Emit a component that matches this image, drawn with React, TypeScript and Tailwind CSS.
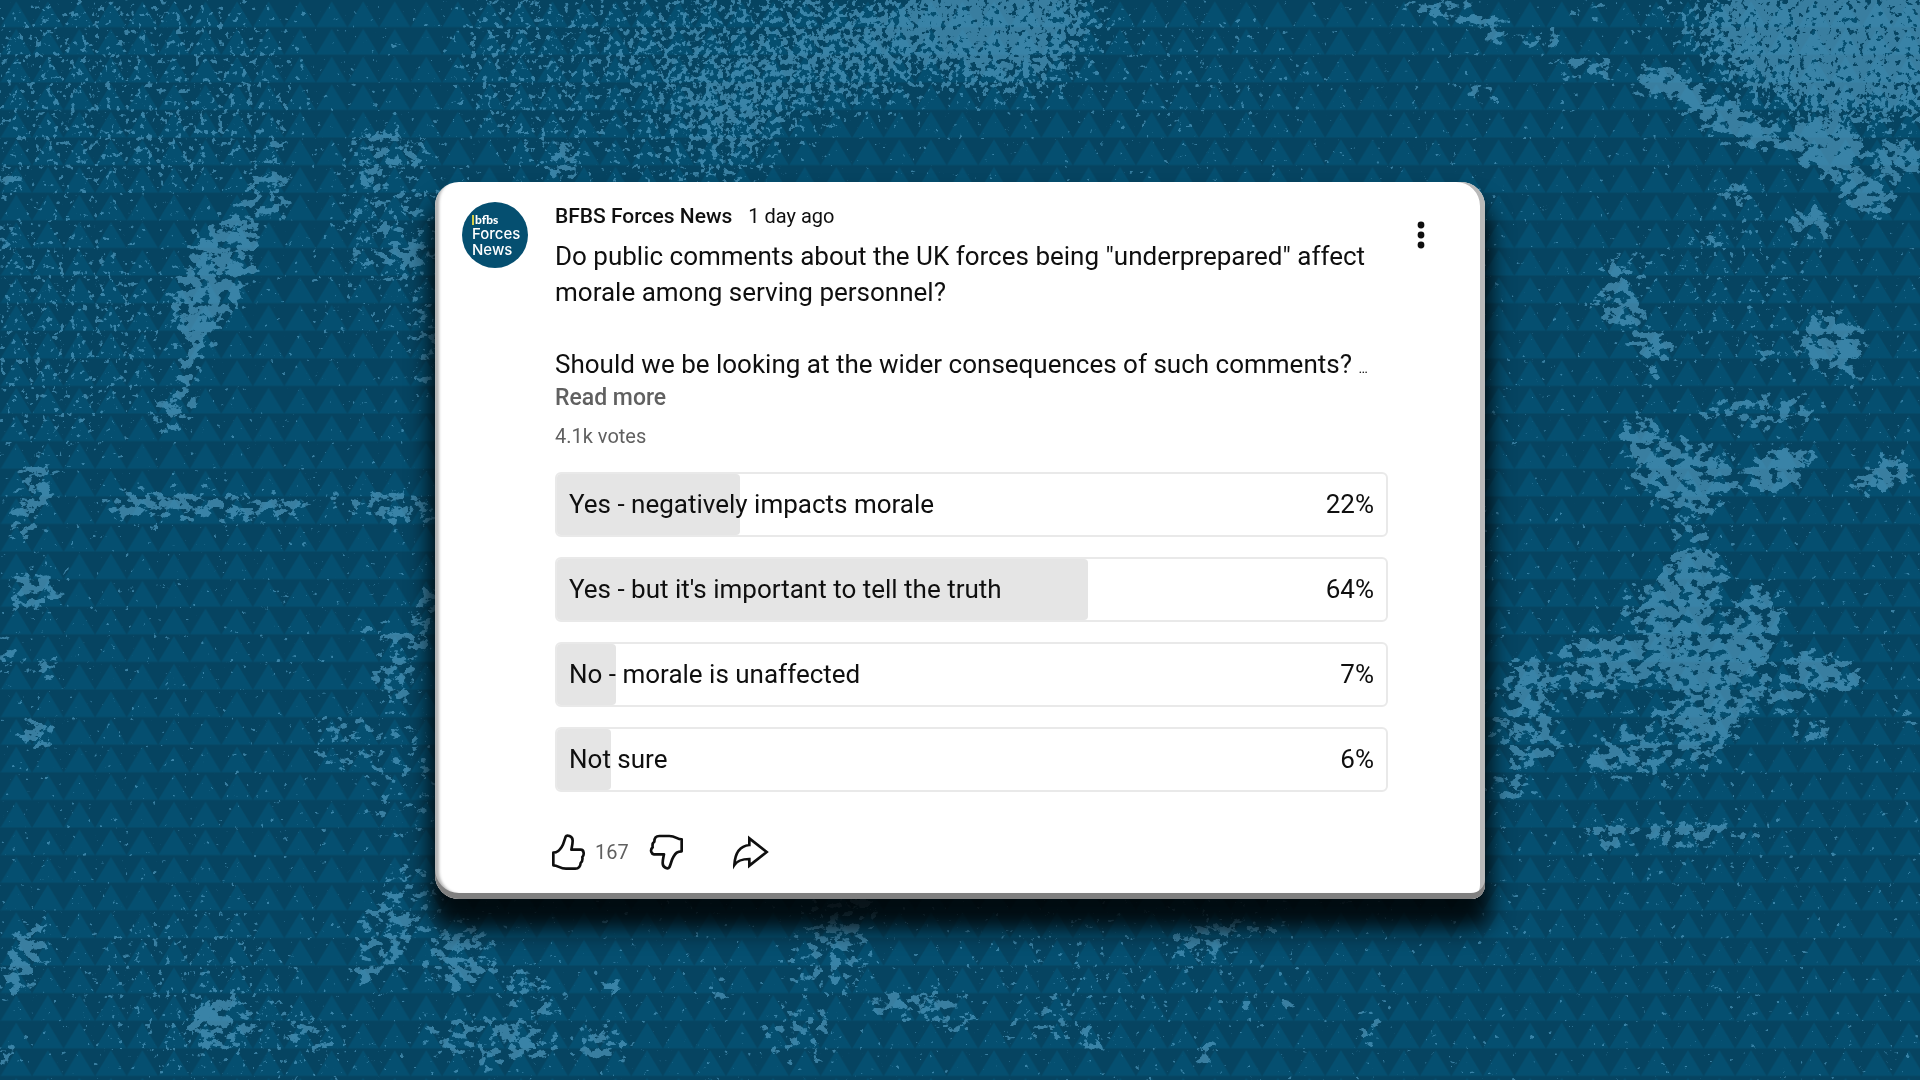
/* ── DATA ─────────────────────────────────────────── */
const pollOptions = [
  { id: "negative",   label: "Yes - negatively impacts morale",            percent: "22%", share: 22.1 },
  { id: "truth",      label: "Yes - but it's important to tell the truth", percent: "64%", share: 64.1 },
  { id: "unaffected", label: "No - morale is unaffected",                  percent: "7%",  share: 7.1  },
  { id: "unsure",     label: "Not sure",                                   percent: "6%",  share: 6.5  },
];

/* cx, cy, rx, ry, rotation, density */
type Blob = [number, number, number, number, number, number];

const specks: Blob[] = [
  [130, 90, 180, 110, 0, 0.31],  [60, 330, 110, 120, 0, 0.27],  [540, 60, 90, 100, 0, 0.35],
  [760, 50, 150, 80, 0, 0.48],   [745, 110, 50, 60, 0, 0.35],   [690, 150, 80, 60, 0, 0.36],
  [990, 18, 115, 46, 0, 0.9],    [1015, 65, 60, 34, 0, 0.65],   [900, 55, 120, 50, 0, 0.35],
  [1840, 25, 140, 70, 0, 0.92],  [1880, 80, 90, 50, 0, 0.7],    [1780, 90, 90, 30, 20, 0.42],
  [1690, 20, 60, 25, 0, 0.4],    [190, 980, 110, 70, 0, 0.22],  [250, 1050, 120, 30, 0, 0.2],
  [390, 230, 60, 110, 0, 0.22],  [1740, 280, 80, 80, 0, 0.18],  [1200, 80, 120, 70, 0, 0.14],
  [1120, 970, 180, 60, 0, 0.14], [1690, 850, 130, 30, 0, 0.14],
];

const patches: Blob[] = [
  // left side
  [215, 275, 36, 68, 25, 0.84],  [268, 195, 26, 34, 10, 0.62],  [277, 142, 8, 16, 30, 0.8],
  [192, 355, 12, 44, 15, 0.9],   [175, 412, 22, 20, 0, 0.72],   [390, 148, 42, 24, 15, 0.58],
  [365, 176, 14, 10, 0, 0.85],   [390, 230, 46, 54, 0, 0.42],   [412, 260, 18, 16, 0, 0.62],
  [425, 340, 16, 60, 0, 0.5],    [565, 160, 18, 24, 20, 0.75],  [8, 178, 14, 22, 0, 0.7],
  [6, 237, 14, 12, 0, 0.75],     [38, 485, 22, 26, 15, 0.72],   [22, 520, 20, 24, 0, 0.54],
  [150, 505, 55, 15, 0, 0.82],   [240, 507, 70, 14, 0, 0.72],   [400, 508, 38, 18, 0, 0.68],
  [340, 502, 60, 6, 0, 0.7],     [35, 590, 26, 24, 0, 0.76],    [48, 667, 13, 12, 0, 0.95],
  [5, 662, 12, 22, 0, 0.76],     [38, 732, 18, 15, 20, 0.95],   [24, 960, 18, 46, 20, 0.8],
  [5, 1052, 12, 14, 0, 0.75],    [425, 610, 12, 34, 10, 0.72],  [400, 665, 24, 40, 15, 0.58],
  [370, 632, 18, 8, 0, 0.82],    [390, 690, 14, 12, 0, 0.78],   [345, 740, 36, 34, 0, 0.46],
  [400, 780, 34, 70, 0, 0.36],
  // bottom edge
  [410, 895, 34, 36, 0, 0.48],   [385, 938, 34, 34, 40, 0.58],  [460, 958, 34, 36, 0, 0.7],
  [365, 980, 14, 18, 20, 0.7],   [520, 985, 28, 16, 0, 0.66],   [210, 1016, 32, 17, -40, 0.86],
  [232, 1035, 34, 12, -30, 0.68], [300, 1026, 24, 14, -45, 0.66], [322, 1042, 12, 8, 0, 0.9],
  [434, 1036, 18, 7, 35, 0.95],  [490, 1040, 55, 30, 0, 0.52],  [600, 1045, 28, 18, 0, 0.74],
  [530, 1042, 28, 22, 0, 0.52],  [610, 985, 16, 10, 0, 0.74],   [550, 1005, 14, 14, 0, 0.66],
  [845, 912, 34, 30, 0, 0.56],   [830, 960, 46, 34, 0, 0.52],   [905, 1003, 44, 12, 0, 0.88],
  [955, 1015, 26, 14, 30, 0.68], [800, 1035, 40, 30, 0, 0.48],  [1010, 1028, 8, 10, 0, 0.9],
  [1060, 1020, 30, 20, 0, 0.5],  [1092, 1045, 14, 18, 0, 0.6],  [1200, 945, 28, 14, 0, 0.74],
  [1235, 930, 50, 9, 0, 0.66],   [1248, 1005, 10, 8, 0, 0.9],   [1282, 1006, 14, 8, 0, 0.78],
  [1205, 1055, 10, 16, 20, 0.85], [1370, 1030, 10, 20, 0, 0.7], [715, 990, 12, 18, 0, 0.56],
  // right side
  [1450, 12, 46, 10, 10, 0.9],   [1495, 34, 18, 14, 30, 0.86],  [1545, 40, 24, 9, 10, 0.84],
  [1590, 68, 34, 11, 0, 0.8],    [1670, 86, 38, 17, 15, 0.98],  [1735, 122, 52, 18, 25, 0.98],
  [1825, 145, 42, 30, 15, 1],    [1900, 158, 28, 22, -15, 0.88], [1866, 195, 32, 19, 30, 0.95],
  [1740, 195, 22, 10, 10, 1],    [1812, 222, 26, 12, 0, 1],     [1708, 240, 22, 9, 15, 0.75],
  [1484, 92, 24, 10, 20, 0.66],  [1590, 6, 16, 10, 0, 0.7],     [1625, 264, 32, 7, 0, 0.85],
  [1620, 300, 24, 28, 0, 0.78],  [1652, 342, 34, 15, 40, 0.8],  [1645, 372, 10, 14, 0, 0.8],
  [1830, 342, 36, 30, 0, 0.86],  [1850, 376, 14, 9, 0, 0.95],   [1685, 475, 56, 34, 5, 0.82],
  [1640, 435, 22, 24, 0, 0.76],  [1780, 470, 36, 21, -25, 1],   [1882, 478, 36, 12, -18, 1],
  [1890, 466, 12, 14, 0, 1],     [1760, 412, 66, 17, 0, 0.68],  [1690, 520, 26, 24, 0, 0.56],
  [1765, 350, 14, 16, 0, 0.56],
  // big splash beside the card
  [1690, 590, 36, 42, 0, 0.84],  [1650, 605, 28, 20, 0, 0.76],  [1680, 658, 80, 34, 0, 0.84],
  [1755, 630, 28, 46, 10, 0.8],  [1825, 672, 42, 17, 20, 0.95], [1590, 665, 36, 36, -30, 0.7],
  [1528, 685, 26, 28, 0, 0.84],  [1530, 735, 38, 32, 0, 0.66],  [1712, 712, 36, 32, 0, 0.78],
  [1775, 695, 38, 18, 0, 0.72],  [1608, 760, 30, 15, -10, 0.9], [1670, 745, 60, 42, 0, 0.54],
  [1522, 770, 10, 12, 0, 0.95],  [1512, 790, 26, 8, 15, 0.9],   [1812, 730, 18, 12, 0, 0.9],
  [1608, 834, 28, 13, 0, 0.88],  [1688, 832, 46, 13, 0, 0.86],  [1700, 562, 26, 18, 0, 0.64],
  [1907, 722, 12, 9, 0, 1],      [1750, 832, 14, 10, 0, 0.7],
];

/* ── BACKDROP ─────────────────────────────────────── */
function Blobs({ items }: { items: Blob[] }) {
  return (
    <>
      {items.map(([cx, cy, rx, ry, turn, density], i) => (
        <ellipse key={i} cx={cx} cy={cy} rx={rx} ry={ry} fillOpacity={density} transform={`rotate(${turn} ${cx} ${cy})`} />
      ))}
    </>
  );
}

function Backdrop() {
  return (
    <svg
      className="absolute inset-0 w-full h-full"
      viewBox="0 0 1920 1080"
      preserveAspectRatio="xMidYMid slice"
      aria-hidden="true"
    >
      <defs>
        <pattern id="triangles" x="0.5" y="0" width="31.54" height="27.6" patternUnits="userSpaceOnUse">
          <path d="M15.77 1.6 L31.3 27.2 H0.2 Z" fill="#054f70" />
        </pattern>
        <filter id="specks" x="0" y="0" width="1920" height="1080" filterUnits="userSpaceOnUse" colorInterpolationFilters="sRGB">
          <feGaussianBlur in="SourceGraphic" stdDeviation="20" result="density" />
          <feTurbulence type="fractalNoise" baseFrequency="0.17" numOctaves="3" seed="7" result="noise" />
          <feComposite in="density" in2="noise" operator="arithmetic" k1="0" k2="0.5" k3="1" k4="0" />
          <feColorMatrix values="0 0 0 0 0.396  0 0 0 0 0.69  0 0 0 0 0.84  0 0 0 14 -11" />
        </filter>
        <filter id="patches" x="0" y="0" width="1920" height="1080" filterUnits="userSpaceOnUse" colorInterpolationFilters="sRGB">
          <feGaussianBlur in="SourceGraphic" stdDeviation="8" result="density" />
          <feTurbulence type="fractalNoise" baseFrequency="0.1 0.12" numOctaves="4" seed="12" result="noise" />
          <feComposite in="density" in2="noise" operator="arithmetic" k1="0" k2="0.6" k3="1.2" k4="-0.15" />
          <feColorMatrix values="0 0 0 0 0.396  0 0 0 0 0.69  0 0 0 0 0.84  0 0 0 14 -11.4" />
        </filter>
      </defs>
      <rect width="1920" height="1080" fill="#064461" />
      <rect width="1920" height="1080" fill="url(#triangles)" />
      <g opacity="0.55">
        <g filter="url(#specks)">
          <rect width="1920" height="1080" fillOpacity="0.04" />
          <Blobs items={specks} />
        </g>
        <g filter="url(#patches)">
          <Blobs items={patches} />
        </g>
      </g>
    </svg>
  );
}

/* ── ICONS ────────────────────────────────────────── */
function ThumbUp() {
  return (
    <svg className="w-9 h-9" viewBox="360 99 108 108" fill="none" stroke="#0f0f0f" strokeWidth="8" strokeLinejoin="round">
      <path d="M367 155 V193 C382 193 386 203 405 203 H433 C444 203 448 197 449 186 C455 181 455 174 454 168 C460 163 460 146 449 146 H421 C423 137 425 129 425 119 C425 104 407 101 404 107 C399 119 399 128 392 138 C385 148 380 155 367 155 Z" />
    </svg>
  );
}

function ThumbDown() {
  return (
    <svg className="w-9 h-9" viewBox="657 105 108 108" fill="none" stroke="#0f0f0f" strokeWidth="8" strokeLinejoin="round">
      <path d="M755 157 V121 C740 121 738 111 718 111 H688 C677 111 673 118 673 128 C667 132 667 139 668 145 C661 150 661 164 672 166 H702 C700 176 698 183 698 192 C698 207 714 211 718 205 C724 192 724 184 730 174 C737 162 742 157 755 157 Z" />
    </svg>
  );
}

function Share() {
  return (
    <svg className="w-9 h-9" viewBox="910 103 108 108" fill="none" stroke="#0f0f0f" strokeWidth="8">
      <path d="M959 116 L1011 157 L959 198 V178 C936 178 922 184 914 196 C916 160 930 139 959 136 Z" />
    </svg>
  );
}

function Dots() {
  return (
    <svg className="w-2 h-7" viewBox="0 0 8 28" fill="#0f0f0f">
      <circle cx="4" cy="4" r="3.4" />
      <circle cx="4" cy="14" r="3.4" />
      <circle cx="4" cy="24" r="3.4" />
    </svg>
  );
}

/* ── POST ─────────────────────────────────────────── */
function Avatar() {
  return (
    <a
      href="#channel"
      aria-label="BFBS Forces News channel"
      className="w-[66px] h-[66px] shrink-0 rounded-full bg-[#054f70] pl-2.5 pt-3 text-white"
    >
      <span className="flex items-center gap-px text-[12px] leading-3 font-black font-['Lato',sans-serif]">
        <span className="w-0.5 h-2.5 bg-[#d8cf4a]" />
        bfbs
      </span>
      <span className="block text-[15px] leading-4 font-medium font-['Inter',sans-serif]">Forces</span>
      <span className="block text-[15px] leading-4 font-medium font-['Inter',sans-serif]">News</span>
    </a>
  );
}

function Poll() {
  return (
    <ul className="mt-6 flex flex-col gap-5">
      {pollOptions.map((option) => (
        <li key={option.id}>
          <button className="grid w-full h-[65px] rounded-md border-2 border-[#e9e9e9] bg-white text-[26px] leading-9 text-left overflow-hidden">
            <span
              className="col-start-1 row-start-1 h-full rounded-r-sm bg-[#e5e5e5]"
              style={{ width: `${option.share}%` }}
            />
            <span className="col-start-1 row-start-1 flex justify-between px-3 pt-3">
              <span>{option.label}</span>
              <span>{option.percent}</span>
            </span>
          </button>
        </li>
      ))}
    </ul>
  );
}

function PostCard() {
  return (
    <article className="relative flex items-start w-full max-w-[1050px] rounded-t-[24px] rounded-bl-[24px] rounded-br-[14px] bg-white pl-[27px] pr-14 pt-5 pb-[29px] text-[#0f0f0f] shadow-[inset_0_-6px_0_#808080,inset_-5px_0_0_#b9b9b9,inset_4px_-4px_3px_#b5b5b5,0_24px_22px_6px_rgba(0,0,0,0.85)]">
      <Avatar />

      <div className="flex-1 ml-[27px] max-w-[833px]">
        <header className="flex items-baseline gap-4 leading-7">
          <a href="#channel" className="text-[21px] font-medium">BFBS Forces News</a>
          <a href="#post" className="text-[20px]">1 day ago</a>
        </header>

        <div className="mt-2 text-[26px] leading-9">
          <p>Do public comments about the UK forces being "underprepared" affect morale among serving personnel?</p>
          <p className="mt-9 whitespace-nowrap">
            Should we be looking at the wider consequences of such comments? <span className="text-sm">…</span>
          </p>
        </div>
        <button className="block text-[23px] leading-8 font-medium text-[#606060]">Read more</button>
        <p className="mt-2.5 text-[20px] leading-6 text-[#606060]">4.1k votes</p>

        <Poll />

        <footer className="mt-[42px] -ml-1 flex items-center">
          <button aria-label="Like"><ThumbUp /></button>
          <span className="ml-2 w-12 text-[20px] leading-6 text-[#606060]">167</span>
          <button aria-label="Dislike" className="ml-1.5"><ThumbDown /></button>
          <button aria-label="Share" className="ml-12"><Share /></button>
        </footer>
      </div>

      <button aria-label="More actions" className="ml-auto mt-[19px] w-4 flex justify-center"><Dots /></button>
    </article>
  );
}

/* ── PAGE ─────────────────────────────────────────── */
export default function App() {
  return (
    <main className="relative min-h-screen overflow-hidden flex items-center justify-center bg-[#064461] font-['Roboto',sans-serif]">
      <Backdrop />
      <PostCard />
    </main>
  );
}
